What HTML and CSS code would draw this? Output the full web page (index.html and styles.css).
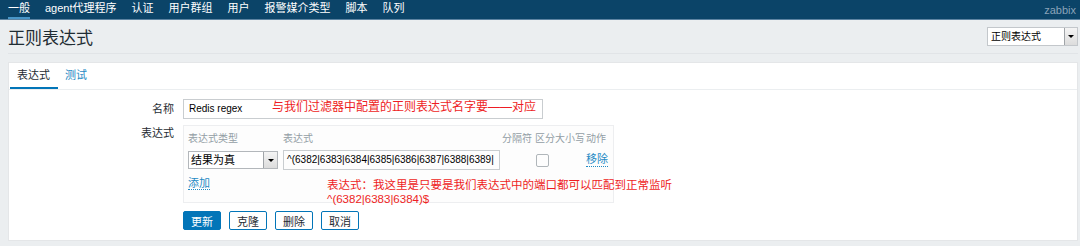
FILE: index.html
```html
<!DOCTYPE html>
<html lang="zh">
<head>
    <meta charset="UTF-8">
    <title>正则表达式</title>
    <link rel="stylesheet" href="styles.css">
</head>
<body>
    <div class="top-nav">
        <ul class="menu">
            <li class="selected">一般</li>
            <li>agent代理程序</li>
            <li>认证</li>
            <li>用户群组</li>
            <li>用户</li>
            <li>报警媒介类型</li>
            <li>脚本</li>
            <li>队列</li>
        </ul>
        <span class="server">zabbix</span>
    </div>

    <div class="header">
        <h1>正则表达式</h1>
        <div class="page-select">
            <span class="select-text">正则表达式</span>
            <span class="select-btn"><i class="arrow"></i></span>
        </div>
    </div>

    <div class="container">
        <ul class="tabs">
            <li class="active">表达式</li>
            <li>测试</li>
        </ul>

        <div class="form">
            <div class="form-row">
                <label class="form-label">名称</label>
                <div class="form-field">
                    <div class="text-input name-input">
                        Redis regex
                        <span class="note note-name">与我们过滤器中配置的正则表达式名字要——对应</span>
                    </div>
                </div>
            </div>

            <div class="form-row">
                <label class="form-label label-expr">表达式</label>
                <div class="form-field">
                    <div class="expr-table">
                        <div class="expr-grid">
                            <span class="col-head">表达式类型</span>
                            <span class="col-head">表达式</span>
                            <span class="col-head">分隔符</span>
                            <span class="col-head">区分大小写</span>
                            <span class="col-head">动作</span>

                            <div class="combo">
                                <span class="combo-text">结果为真</span>
                                <span class="select-btn"><i class="arrow"></i></span>
                            </div>
                            <div class="text-input expr-input">^(6382|6383|6384|6385|6386|6387|6388|6389|</div>
                            <span></span>
                            <span class="check-cell"><span class="checkbox"></span></span>
                            <a class="link">移除</a>
                        </div>
                        <div class="add-row">
                            <a class="link">添加</a>
                            <div class="note note-expr">
                                表达式：我这里是只要是我们表达式中的端口都可以匹配到正常监听<br>
                                ^(6382|6383|6384)$
                            </div>
                        </div>
                    </div>
                </div>
            </div>

            <div class="form-row buttons">
                <span class="form-label"></span>
                <div class="form-field button-list">
                    <button class="btn btn-primary">更新</button>
                    <button class="btn">克隆</button>
                    <button class="btn">删除</button>
                    <button class="btn">取消</button>
                </div>
            </div>
        </div>
    </div>
</body>
</html>
```

FILE: styles.css
```css
body {
    margin: 0;
    background-color: #ebeef0;
    font-family: "Liberation Sans", "Noto Sans CJK SC", sans-serif;
    font-size: 11px;
    color: #1f2c33;
}
ul {
    list-style: none;
    margin: 0;
    padding: 0;
}

.top-nav {
    height: 19px;
    background-color: #0b4468;
    border-bottom: 1px solid #5d84a2;
    display: flex;
    justify-content: space-between;
    align-items: center;
    padding: 0 4px 0 8px;
}
.menu {
    display: flex;
    gap: 15px;
    height: 100%;
}
.menu li {
    color: #ffffff;
    line-height: 17px;
    height: 19px;
    box-sizing: border-box;
}
.menu li.selected {
    border-bottom: 2px solid #4795c7;
}
.server {
    color: #8aa3b8;
}

.header {
    display: flex;
    justify-content: space-between;
    align-items: center;
    margin: 0 2px 0 8px;
    height: 33px;
    border-bottom: 1px solid #e1e4e7;
}
.header h1 {
    margin: 0;
    font-size: 17px;
    font-weight: normal;
    color: #1f2c33;
}
.page-select {
    display: flex;
    width: 89px;
    height: 17px;
    border: 1px solid #c3c7cb;
    background: #ffffff;
}
.select-text {
    flex: 1;
    padding-left: 3px;
    line-height: 17px;
    font-size: 10px;
    color: #000;
}
.select-btn {
    width: 12px;
    border-left: 1px solid #a0a4a8;
    background: linear-gradient(#f4f4f4, #dcdcdc);
    display: flex;
    align-items: center;
    justify-content: center;
}
.arrow {
    width: 0;
    height: 0;
    border-left: 3px solid transparent;
    border-right: 3px solid transparent;
    border-top: 3px solid #000;
}

.container {
    margin: 8px 2px 4px 8px;
    background: #ffffff;
    border: 1px solid #e4e6e8;
    height: 179px;
    box-sizing: border-box;
}
.tabs {
    display: flex;
    height: 26px;
    border-bottom: 1px solid #ebeef0;
    padding-left: 1px;
}
.tabs li {
    padding: 0 8px 0 7px;
    line-height: 24px;
    color: #1f8ac4;
}
.tabs li.active {
    color: #1f2c33;
    border-bottom: 2px solid #0275b8;
}

.form {
    padding-top: 9px;
}
.form-row {
    display: flex;
    margin-bottom: 6px;
}
.form-label {
    width: 165px;
    text-align: right;
    padding-right: 9px;
    line-height: 20px;
    flex-shrink: 0;
}
.label-expr {
    line-height: 16px;
}
.text-input {
    position: relative;
    border: 1px solid #c9cdd0;
    height: 20px;
    box-sizing: border-box;
    line-height: 18px;
    padding-left: 5px;
    color: #000;
    white-space: nowrap;
    overflow: visible;
}
.name-input {
    width: 360px;
    font-size: 10px;
}
.note {
    color: #ee1d24;
    font-size: 12px;
    white-space: nowrap;
}
.note-name {
    position: absolute;
    left: 88px;
    top: -2px;
}

.expr-table {
    width: 431px;
    height: 78px;
    box-sizing: border-box;
    border: 1px solid #edeef0;
    background: #fdfdfd;
    padding: 3px 4px 0;
}
.expr-grid {
    display: grid;
    grid-template-columns: 95px 219px 33px 51px auto;
    align-items: center;
    row-gap: 1px;
}
.col-head {
    color: #939da5;
    line-height: 20px;
    font-size: 10px;
}
.combo {
    display: flex;
    width: 90px;
    height: 18px;
    border: 1px solid #b3b7bb;
    background: #fff;
    box-sizing: border-box;
}
.combo-text {
    flex: 1;
    padding-left: 2px;
    line-height: 16px;
    color: #000;
}
.combo .select-btn {
    width: 13px;
}
.expr-input {
    width: 217px;
    font-size: 10px;
    padding-left: 3px;
    overflow: hidden;
}
.checkbox {
    display: block;
    width: 11px;
    height: 11px;
    border: 1px solid #b0b6ba;
    border-radius: 2px;
    margin-left: 1px;
}
.link {
    color: #1f8ac4;
    border-bottom: 1px dotted #1f8ac4;
    line-height: 13px;
    justify-self: start;
    cursor: pointer;
}
.add-row {
    position: relative;
    margin-top: 7px;
}
.note-expr {
    position: absolute;
    left: 139px;
    top: 1px;
    line-height: 14px;
    font-size: 11.5px;
}

.buttons {
    margin-top: 8px;
}
.button-list {
    display: flex;
    gap: 8px;
}
.btn {
    width: 38px;
    height: 19px;
    padding: 0;
    border: 1px solid #0275b8;
    background: #ffffff;
    color: #1f2c33;
    font-family: inherit;
    font-size: 11px;
    border-radius: 2px;
}
.btn-primary {
    background: #0275b8;
    color: #ffffff;
}
```
